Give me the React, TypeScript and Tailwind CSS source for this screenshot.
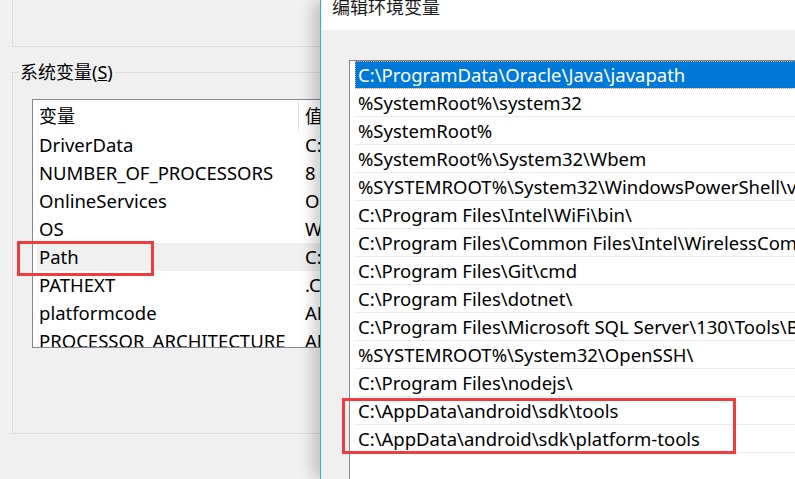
const sysVars: [string, string][] = [
  ["DriverData", "C:\\Windows\\System32\\Drivers\\DriverData"],
  ["NUMBER_OF_PROCESSORS", "8"],
  ["OnlineServices", "Online Services"],
  ["OS", "Windows_NT"],
  ["Path", "C:\\ProgramData\\Oracle\\Java\\javapath"],
  ["PATHEXT", ".COM;.EXE;.BAT;.CMD"],
  ["platformcode", "AN"],
  ["PROCESSOR_ARCHITECTURE", "AMD64"],
];

const paths = [
  "C:\\ProgramData\\Oracle\\Java\\javapath",
  "%SystemRoot%\\system32",
  "%SystemRoot%",
  "%SystemRoot%\\System32\\Wbem",
  "%SYSTEMROOT%\\System32\\WindowsPowerShell\\v1.0\\",
  "C:\\Program Files\\Intel\\WiFi\\bin\\",
  "C:\\Program Files\\Common Files\\Intel\\WirelessCommon\\",
  "C:\\Program Files\\Git\\cmd",
  "C:\\Program Files\\dotnet\\",
  "C:\\Program Files\\Microsoft SQL Server\\130\\Tools\\Binn\\",
  "%SYSTEMROOT%\\System32\\OpenSSH\\",
  "C:\\Program Files\\nodejs\\",
  "C:\\AppData\\android\\sdk\\tools",
  "C:\\AppData\\android\\sdk\\platform-tools",
];

function SystemVars() {
  return (
    <div className="relative w-[320px] shrink-0 overflow-hidden bg-[#f0f0f0]">
      <div className="ml-[12px] h-[47px] w-[400px] border-b border-l border-[#dcdcdc]" />

      <fieldset className="ml-[12px] mt-[13px] h-[374px] w-[400px] border border-[#dcdcdc]">
        <legend className="ml-[5px] px-[2px] text-[18px] leading-[24px] text-black">
          系统变量(<span className="underline">S</span>)
        </legend>

        <div className="ml-[19px] mt-[15px] h-[249px] w-[360px] overflow-hidden border border-[#828790] bg-white text-[18.5px] leading-[22px] text-black">
          <div className="flex h-[31px] items-center">
            <div className="flex h-full w-[266px] items-center border-r border-[#e5e5e5] pl-[6px] text-[18px]">
              变量
            </div>
            <div className="pl-[6px] text-[18px]">值</div>
          </div>
          {sysVars.map(([name, value]) => (
            <div
              key={name}
              data-active={name === "Path"}
              className="ml-[4px] flex h-[28px] items-center whitespace-nowrap data-[active=true]:bg-[#f0f0f0]"
            >
              <div className="w-[261px] shrink-0 overflow-hidden pl-[2px]">{name}</div>
              <div className="pl-[7px]">{value}</div>
            </div>
          ))}
        </div>
      </fieldset>

      <div className="absolute left-[17px] top-[241px] h-[35px] w-[137px] border-[3px] border-[#f03c3c]" />
    </div>
  );
}

function EditPathDialog() {
  return (
    <div className="relative z-10 flex flex-1 flex-col border-l border-[#1cbccf] bg-[#f0f0f0] shadow-[-10px_0_12px_-2px_rgba(0,0,0,0.18)]">
      <div className="h-[30px] shrink-0 overflow-hidden bg-white pl-[11px]">
        <div className="-mt-[2px] text-[18px] leading-[18px] text-[#1a1a1a]">编辑环境变量</div>
      </div>

      <div className="ml-[28px] mt-[30px] flex-1 overflow-hidden border-l border-t border-[#828790] bg-white pl-[5px] text-[18.5px] leading-[22px] text-black">
        {paths.map((p, i) => (
          <div
            key={p}
            data-selected={i === 0}
            className="flex h-[28px] items-center overflow-hidden whitespace-nowrap border-b border-[#ebebeb] pl-[3px] data-[selected=true]:bg-[#0078d7] data-[selected=true]:text-white data-[selected=true]:outline-1 data-[selected=true]:outline-dotted data-[selected=true]:-outline-offset-1 data-[selected=true]:outline-[#f0a060]"
          >
            {p}
          </div>
        ))}
      </div>

      <div className="absolute left-[21px] top-[398px] h-[56px] w-[394px] border-[3px] border-[#f03c3c]" />
    </div>
  );
}

export default function App() {
  return (
    <div className="flex h-[479px] w-[795px] overflow-hidden bg-[#f0f0f0] font-['Noto_Sans','Noto_Sans_CJK_SC',sans-serif]">
      <SystemVars />
      <EditPathDialog />
    </div>
  );
}
